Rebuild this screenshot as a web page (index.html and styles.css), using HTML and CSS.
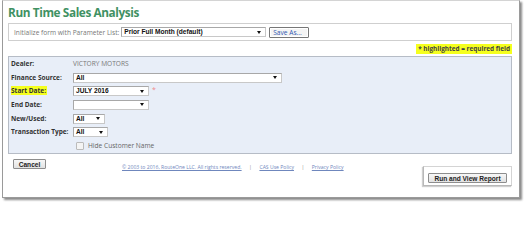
FILE: index.html
```html
<!DOCTYPE html>
<html>
<head>
<meta charset="utf-8">
<link rel="stylesheet" href="styles.css">
</head>
<body>
<div class="window">
  <h1 class="title">Run Time Sales Analysis</h1>
  <div class="param-box">
    <span class="param-label">Initialize form with Parameter List:</span>
    <span class="sel sel-param"><span class="sel-text">Prior Full Month (default)</span><span class="arrow"></span></span>
    <span class="btn-save">Save As...</span>
  </div>
  <div class="req-row"><span class="req">* highlighted = required field</span></div>
  <div class="form-panel">
    <div class="row"><span class="lbl">Dealer:</span><span class="val">VICTORY MOTORS</span></div>
    <div class="row"><span class="lbl">Finance Source:</span><span class="sel sel-finance"><span class="sel-text">All</span><span class="arrow"></span></span></div>
    <div class="row"><span class="lbl"><span class="hl">Start Date:</span></span><span class="sel sel-date"><span class="sel-text">JULY 2016</span><span class="arrow"></span></span><span class="star">*</span></div>
    <div class="row"><span class="lbl">End Date:</span><span class="sel sel-date"><span class="sel-text"></span><span class="arrow"></span></span></div>
    <div class="row"><span class="lbl">New/Used:</span><span class="sel sel-new"><span class="sel-text">All</span><span class="arrow"></span></span></div>
    <div class="row"><span class="lbl">Transaction Type:</span><span class="sel sel-trans"><span class="sel-text">All</span><span class="arrow"></span></span></div>
    <div class="row"><span class="lbl"></span><span class="check-wrap"><span class="checkbox"></span><span class="check-text">Hide Customer Name</span></span></div>
  </div>
  <div class="bottom">
    <span class="btn btn-cancel">Cancel</span>
    <div class="footer">
      <a class="flink">© 2003 to 2016, RouteOne LLC. All rights reserved.</a>
      <span class="sep">|</span>
      <a class="flink">CAS Use Policy</a>
      <span class="sep">|</span>
      <a class="flink">Privacy Policy</a>
    </div>
    <div class="run-frame"><span class="btn btn-run">Run and View Report</span></div>
  </div>
</div>
</body>
</html>
```
FILE: styles.css
```css
html, body {
  margin: 0;
  padding: 0;
  background: #ffffff;
}
body {
  width: 526px;
  height: 205px;
  overflow: hidden;
  font-family: "Open Sans", "DejaVu Sans", sans-serif;
}
.window {
  margin-left: 2px;
  width: 518px;
  height: 198px;
  border: 1px solid #9a9a9a;
  border-top-color: #d4d4d4;
  box-shadow: 2px 2px 2px #8a8a8a;
  padding: 0 7px 0 5px;
  box-sizing: border-box;
  background: #fff;
}
.title {
  margin: 0;
  padding-top: 2px;
  height: 19px;
  font-size: 11.8px;
  line-height: 18px;
  font-weight: 700;
  color: #3f9163;
  letter-spacing: -0.4px;
}
.param-box {
  margin-top: 1px;
  height: 18px;
  border: 1px solid #cfcfcf;
  box-sizing: border-box;
  display: flex;
  align-items: center;
  padding-left: 5px;
}
.param-label {
  font-size: 6.6px;
  color: #777;
  margin-right: 2px;
}
.sel {
  display: inline-flex;
  align-items: center;
  justify-content: space-between;
  height: 10px;
  box-sizing: border-box;
  background: #fff;
  border: 1px solid #a8a8a8;
  border-right-color: #c8c8c8;
  border-bottom-color: #c8c8c8;
  padding: 0 4px 0 2px;
}
.sel-text {
  font-family: "Liberation Sans", Arial, sans-serif;
  font-weight: 700;
  font-size: 6.6px;
  color: #111;
  line-height: 8px;
}
.arrow {
  width: 0;
  height: 0;
  border-left: 2px solid transparent;
  border-right: 2px solid transparent;
  border-top: 3px solid #111;
}
.sel-param { width: 145px; }
.btn-save {
  margin-left: 3px;
  height: 11px;
  width: 40px;
  box-sizing: border-box;
  border: 1px solid #777;
  border-radius: 1px;
  background: #f4f4f4;
  font-size: 6.6px;
  color: #2f57b0;
  line-height: 9px;
  padding-left: 3px;
  box-shadow: inset 0 0 0 1px #fff;
}
.req-row {
  display: flex;
  justify-content: flex-end;
  height: 15px;
  align-items: center;
}
.req {
  background: #f5ff1e;
  font-size: 6.4px;
  font-weight: 700;
  color: #444;
  line-height: 10px;
  padding: 0 2px;
}
.form-panel {
  background: #e8eef8;
  border: 1px solid #b6bcc6;
  height: 98px;
  box-sizing: border-box;
  padding-left: 2px;
}
.row {
  height: 13.7px;
  display: flex;
  align-items: center;
}
.lbl {
  width: 62px;
  flex: none;
  font-size: 6.5px;
  font-weight: 700;
  color: #333;
  line-height: 10px;
}
.hl {
  background: #f5ff1e;
  padding: 0 1px 0 0;
}
.val {
  font-size: 6.6px;
  color: #777;
}
.sel-finance { width: 209px; }
.sel-date { width: 76px; }
.sel-new { width: 32px; }
.sel-trans { width: 35px; }
.star {
  color: #f08a8a;
  font-size: 7px;
  margin-left: 3px;
  margin-top: -3px;
}
.check-wrap {
  display: flex;
  align-items: center;
  margin-left: 3px;
}
.checkbox {
  width: 6px;
  height: 6px;
  border: 1px solid #bbb;
  border-radius: 1px;
  background: #f4f4f4;
  margin-right: 4px;
}
.check-text {
  font-size: 6.6px;
  color: #666;
}
.bottom {
  display: flex;
  align-items: flex-start;
}
.btn {
  display: inline-block;
  box-sizing: border-box;
  border: 1px solid #8d8d8d;
  border-radius: 1px;
  background: linear-gradient(#f7f7f7, #e2e2e2);
  font-family: "Liberation Sans", Arial, sans-serif;
  font-weight: 700;
  font-size: 6.6px;
  color: #222;
  text-align: center;
  line-height: 9px;
  height: 10px;
}
.btn-cancel {
  margin-top: 5px;
  margin-left: 5px;
  width: 33px;
}
.footer {
  margin-left: 76px;
  margin-top: 10px;
  font-size: 5.1px;
  color: #7a8fb8;
  display: flex;
  gap: 7.5px;
}
.flink {
  color: #6f87bd;
  text-decoration: underline;
}
.sep {
  color: #888;
}
.run-frame {
  margin-left: auto;
  margin-top: 12px;
  width: 89px;
  height: 20px;
  box-sizing: border-box;
  border: 1px solid #d4d4d4;
  border-left-color: #b8b8b8;
  border-bottom-color: #b8b8b8;
  box-shadow: -1px 1px 1px #cfcfcf;
  display: flex;
  align-items: center;
  justify-content: center;
}
.btn-run {
  width: 79px;
  margin-top: 3px;
}
```
